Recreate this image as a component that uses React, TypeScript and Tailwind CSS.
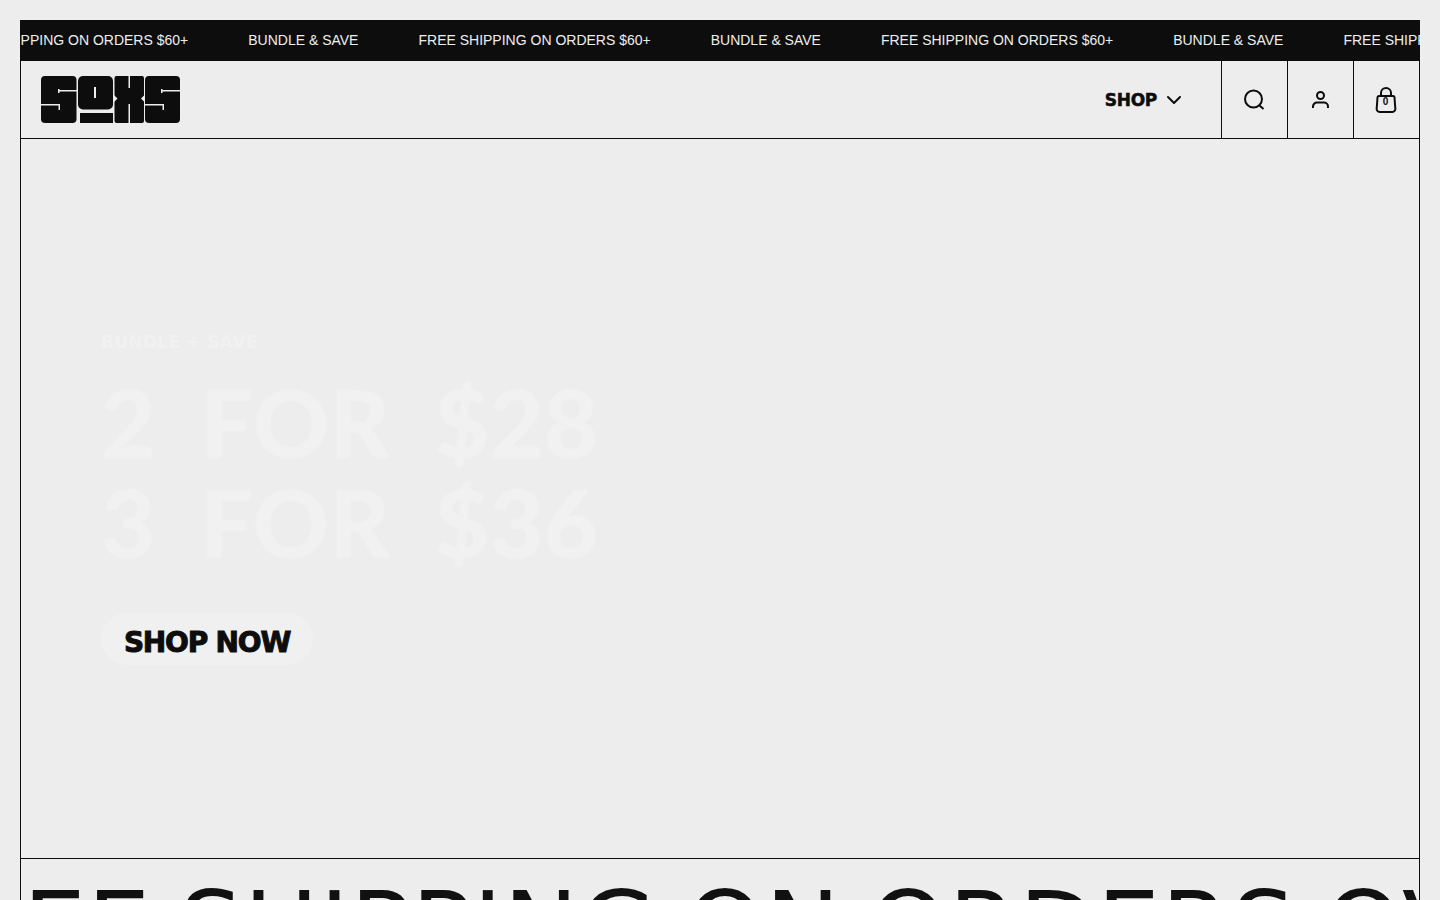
import { ChevronDown } from 'lucide-react'

const TICKER = [
  'FREE SHIPPING ON ORDERS $60+',
  'BUNDLE & SAVE',
  'FREE SHIPPING ON ORDERS $60+',
  'BUNDLE & SAVE',
  'FREE SHIPPING ON ORDERS $60+',
  'BUNDLE & SAVE',
  'FREE SHIPPING ON ORDERS $60+',
]

function Logo() {
  return (
    <svg width="140" height="48" viewBox="0 0 140 48" className="block">
      <g fill="#0d0d0d">
        <rect x="0" y="0" width="35.500" height="47" rx="4" />
        <rect x="37" y="0" width="35" height="33.500" rx="5" />
        <rect x="39" y="37" width="33" height="10" />
        <rect x="73.500" y="0" width="29.500" height="47" rx="2" />
        <rect x="104" y="0" width="35" height="47" rx="4" />
      </g>
      <g fill="#ededed">
        <rect x="18" y="14" width="18" height="1.500" />
        <rect x="17" y="13" width="1.500" height="4" />
        <rect x="0" y="28" width="18.500" height="1.500" />
        <rect x="17.500" y="28" width="1.500" height="6" />
        <rect x="121" y="14" width="19" height="1.500" />
        <rect x="120" y="13" width="1.500" height="4" />
        <rect x="104" y="28" width="18.500" height="1.500" />
        <rect x="121.500" y="28" width="1.500" height="6" />
        <rect x="53" y="11" width="2" height="11" />
        <rect x="87.500" y="0" width="1.500" height="12" />
        <rect x="87.500" y="28" width="1.500" height="19" />
        <path d="M73 19l3.500 3.500-3.500 3.500zM103.500 19l-3.500 3.500 3.500 3.500z" />
      </g>
    </svg>
  )
}

export default function App() {
  return (
    <div className="h-screen overflow-hidden bg-[#ededed] pt-5 px-5 font-['Liberation_Sans',sans-serif]">
      <div className="border-x border-[#0d0d0d] h-full flex flex-col">
        {/* Announcement bar */}
        <div className="h-[41px] shrink-0 bg-[#0d0d0d] overflow-hidden -mx-px flex items-center pb-px">
          <div className="flex gap-[60px] whitespace-nowrap text-sm text-[#ededed] -ml-[64px]">
            {TICKER.map((item, i) => (
              <span key={i}>{item}</span>
            ))}
          </div>
        </div>

        {/* Header */}
        <header className="h-[78px] shrink-0 border-b border-[#0d0d0d] flex items-stretch">
          <div className="flex items-center pl-5">
            <Logo />
          </div>
          <div className="ml-auto flex items-center gap-[5px] pr-[35px]">
            <span className="pt-0.5 font-['DejaVu_Sans',sans-serif] font-bold text-[17px] text-[#0d0d0d] tracking-[-0.3px] [-webkit-text-stroke:0.5px_#0d0d0d]">SHOP</span>
            <ChevronDown size={24} strokeWidth={2} className="text-[#0d0d0d]" />
          </div>
          <div className="w-[66px] border-l border-[#0d0d0d] flex items-center justify-center">
            <svg width="24" height="24" viewBox="0 0 24 24" fill="none" stroke="#0d0d0d" strokeWidth="2">
              <circle cx="10.500" cy="11" r="8.500" />
              <path d="M16.500 17.500l4 3.500" />
            </svg>
          </div>
          <div className="w-[66px] border-l border-[#0d0d0d] flex items-center justify-center">
            <svg width="20" height="20" viewBox="0 0 20 20" fill="none" stroke="#0d0d0d" strokeWidth="2">
              <circle cx="9.500" cy="5.500" r="3.500" />
              <path d="M2 18v-1.500a4 4 0 0 1 4-4h7a4 4 0 0 1 4 4V18" />
            </svg>
          </div>
          <div className="w-[66px] border-l border-[#0d0d0d] flex items-center justify-center">
            <div className="relative w-6 h-[26px]">
              <svg width="24" height="26" viewBox="0 0 24 26" fill="none" stroke="#0d0d0d" strokeWidth="2">
                <path d="M4 9h14a1.500 1.500 0 0 1 1.500 1.500l.800 11a3 3 0 0 1-3 3.500H4.700a3 3 0 0 1-3-3.500l.800-11A1.500 1.500 0 0 1 4 9z" />
                <path d="M6 9V6a5 5 0 0 1 10 0v3" />
              </svg>
              <span className="absolute left-0 w-[22px] top-[9px] text-center text-[10px] leading-3 font-bold text-[#0d0d0d]">0</span>
            </div>
          </div>
        </header>

        {/* Hero */}
        <section className="h-[720px] shrink-0 border-b border-[#0d0d0d] pl-20 pt-[191px]">
          <p className="font-['DejaVu_Sans',sans-serif] font-bold text-[17px] leading-6 text-[#f1f1f1] blur-[0.5px] tracking-[0.3px]">BUNDLE + SAVE</p>
          <h1 className="mt-[18px] font-['Lato',sans-serif] font-black text-[94px] leading-[100px] text-[#f1f1f1] blur-[1px] whitespace-pre">
            <span className="block">2  FOR  $28</span>
            <span className="block">3  FOR  $36</span>
          </h1>
          <a className="mt-[41px] inline-flex h-[52px] w-[212px] items-center justify-center rounded-full bg-[#f0f0f0] pt-2 font-['DejaVu_Sans',sans-serif] font-bold text-[28px] text-[#0d0d0d] tracking-[-1.2px] [-webkit-text-stroke:1px_#0d0d0d]">
            SHOP NOW
          </a>
        </section>

        {/* Big marquee */}
        <div className="overflow-hidden grow">
          <div className="pl-[2px] mt-5 whitespace-nowrap font-['DejaVu_Sans',sans-serif] text-[100px] leading-[100px] tracking-[1px] [word-spacing:-5px] text-[#111111]">
            EE SHIPPING ON ORDERS OVER $60+
          </div>
        </div>
      </div>
    </div>
  )
}
